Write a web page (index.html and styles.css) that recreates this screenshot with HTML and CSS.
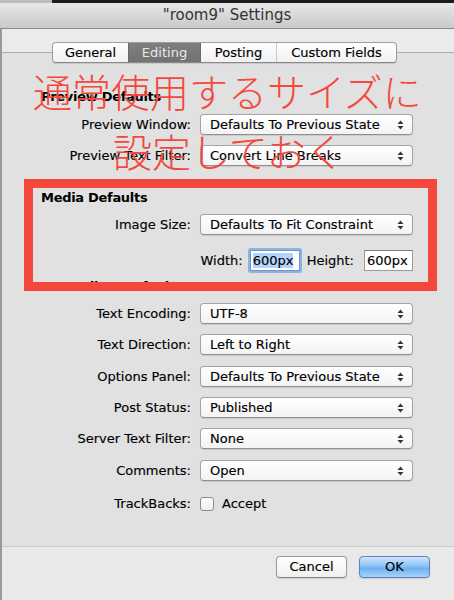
FILE: index.html
```html
<!DOCTYPE html>
<html lang="ja">
<head>
<meta charset="utf-8">
<title>"room9" Settings</title>
<link rel="stylesheet" href="styles.css">
</head>
<body>
<div class="window">
  <div class="topstrip"><div class="strip-left"></div><div class="strip-right"></div></div>
  <div class="titlebar">"room9" Settings</div>
  <div class="frame">
    <div class="header"></div>
    <div class="tabbox">
      <div class="tabs">
        <div class="tab t-general">General</div>
        <div class="tab t-editing selected">Editing</div>
        <div class="tab t-posting">Posting</div>
        <div class="tab t-custom">Custom Fields</div>
      </div>

      <div class="heading h-preview">Preview Defaults</div>
      <div class="row r-pw"><div class="label">Preview Window:</div><div class="popup"><span>Defaults To Previous State</span><svg class="arrows" width="7" height="10" viewBox="0 0 7 10"><path d="M0.5 4 L3.5 0.5 L6.5 4 Z M0.5 6 L3.5 9.5 L6.5 6 Z"/></svg></div></div>
      <div class="row r-ptf"><div class="label">Preview Text Filter:</div><div class="popup"><span>Convert Line Breaks</span><svg class="arrows" width="7" height="10" viewBox="0 0 7 10"><path d="M0.5 4 L3.5 0.5 L6.5 4 Z M0.5 6 L3.5 9.5 L6.5 6 Z"/></svg></div></div>

      <div class="heading h-media">Media Defaults</div>
      <div class="row r-is"><div class="label">Image Size:</div><div class="popup"><span>Defaults To Fit Constraint</span><svg class="arrows" width="7" height="10" viewBox="0 0 7 10"><path d="M0.5 4 L3.5 0.5 L6.5 4 Z M0.5 6 L3.5 9.5 L6.5 6 Z"/></svg></div></div>
      <div class="sizerow">
        <span class="slabel">Width:</span>
        <div class="field focused"><span class="sel">600px</span></div>
        <span class="slabel hl">Height:</span>
        <div class="field">600px</div>
      </div>

      <div class="heading h-post">Post Editor Defaults</div>
      <div class="row r-te"><div class="label">Text Encoding:</div><div class="popup"><span>UTF-8</span><svg class="arrows" width="7" height="10" viewBox="0 0 7 10"><path d="M0.5 4 L3.5 0.5 L6.5 4 Z M0.5 6 L3.5 9.5 L6.5 6 Z"/></svg></div></div>
      <div class="row r-td"><div class="label">Text Direction:</div><div class="popup"><span>Left to Right</span><svg class="arrows" width="7" height="10" viewBox="0 0 7 10"><path d="M0.5 4 L3.5 0.5 L6.5 4 Z M0.5 6 L3.5 9.5 L6.5 6 Z"/></svg></div></div>
      <div class="row r-op"><div class="label">Options Panel:</div><div class="popup"><span>Defaults To Previous State</span><svg class="arrows" width="7" height="10" viewBox="0 0 7 10"><path d="M0.5 4 L3.5 0.5 L6.5 4 Z M0.5 6 L3.5 9.5 L6.5 6 Z"/></svg></div></div>
      <div class="row r-ps"><div class="label">Post Status:</div><div class="popup"><span>Published</span><svg class="arrows" width="7" height="10" viewBox="0 0 7 10"><path d="M0.5 4 L3.5 0.5 L6.5 4 Z M0.5 6 L3.5 9.5 L6.5 6 Z"/></svg></div></div>
      <div class="row r-stf"><div class="label">Server Text Filter:</div><div class="popup"><span>None</span><svg class="arrows" width="7" height="10" viewBox="0 0 7 10"><path d="M0.5 4 L3.5 0.5 L6.5 4 Z M0.5 6 L3.5 9.5 L6.5 6 Z"/></svg></div></div>
      <div class="row r-cm"><div class="label">Comments:</div><div class="popup"><span>Open</span><svg class="arrows" width="7" height="10" viewBox="0 0 7 10"><path d="M0.5 4 L3.5 0.5 L6.5 4 Z M0.5 6 L3.5 9.5 L6.5 6 Z"/></svg></div></div>
      <div class="row r-tb"><div class="label">TrackBacks:</div><div class="check"><span class="box"></span><span>Accept</span></div></div>
    </div>
    <div class="footer">
      <div class="button">Cancel</div>
      <div class="button default">OK</div>
    </div>
  </div>

  <div class="annot-box"></div>
  <div class="annot-text">
    <div class="line1">通常使用するサイズに</div>
    <div class="line2">設定しておく</div>
  </div>
</div>
</body>
</html>
```

FILE: styles.css
```css
html, body {
  margin: 0;
  padding: 0;
}
body {
  width: 454px;
  height: 600px;
  overflow: hidden;
  background: #e9e9e9;
  font-family: "DejaVu Sans", "Noto Sans", sans-serif;
  font-size: 13px;
  color: #000;
}
.window {
  position: relative;
  width: 454px;
  height: 600px;
  display: flex;
  flex-direction: column;
}
.topstrip {
  height: 3px;
  display: flex;
}
.strip-left { width: 52px; background: #bcbcbc; }
.strip-right { flex: 1; background: #1c1c1c; }
.titlebar {
  height: 25px;
  border-bottom: 1px solid #8a8a8a;
  background: linear-gradient(#e8e8e8, #c9c9c9);
  text-align: center;
  font-size: 15px;
  line-height: 25px;
  color: #333;
}
.frame {
  flex: 1;
  display: flex;
  flex-direction: column;
  border-left: 2px solid #9a9a9a;
  background: #ebebeb;
}
.header { height: 23px; }
.tabbox {
  height: 493px;
  border-top: 1px solid #ababab;
  border-bottom: 1px solid #cbcbcb;
  background: #e1e1e1;
  -webkit-text-stroke: 0.15px #000;
}
.tabs {
  margin-top: -11px;
  margin-left: 50px;
  width: 345px;
  height: 21px;
  display: flex;
  box-sizing: border-box;
  border: 1px solid #9d9d9d;
  border-bottom-color: #8a8a8a;
  border-radius: 4px;
  overflow: hidden;
  background: linear-gradient(#ffffff, #f1f1f1);
  box-shadow: 0 1px 1px rgba(0,0,0,0.12);
}
.tab {
  height: 19px;
  line-height: 19px;
  text-align: center;
  color: #000;
  box-sizing: border-box;
}
.t-general { width: 75px; }
.t-editing { width: 73px; }
.t-posting { width: 75px; }
.t-custom { flex: 1; border-left: 1px solid #c8c8c8; }
.tab.selected {
  background: linear-gradient(#7f7f7f, #727272);
  color: #e8e8e8;
  -webkit-text-stroke: 0;
  border-left: 1px solid #6a6a6a;
  border-right: 1px solid #6a6a6a;
}
.heading {
  margin-left: 39px;
  height: 16px;
  line-height: 16px;
  font-weight: bold;
  font-size: 13px;
  letter-spacing: -0.3px;
  color: #000;
  -webkit-text-stroke: 0;
}
.h-preview { margin-top: 26px; }
.h-media { margin-top: 24px; }
.h-post { margin-top: 7px; }
.row {
  display: flex;
  align-items: center;
  height: 21px;
}
.label {
  width: 189px;
  margin-right: 9px;
  text-align: right;
  white-space: nowrap;
}
.popup {
  width: 213px;
  height: 21px;
  box-sizing: border-box;
  border: 1px solid #a3a3a3;
  border-bottom-color: #8f8f8f;
  border-radius: 4px;
  background: linear-gradient(#ffffff, #f3f3f3);
  box-shadow: 0 1px 1px rgba(0,0,0,0.1);
  display: flex;
  align-items: center;
  justify-content: space-between;
  padding: 0 8px 0 9px;
  white-space: nowrap;
}
.arrows { fill: #333; }
.r-pw { margin-top: 9px; }
.r-ptf { margin-top: 10px; }
.r-is { margin-top: 8px; }
.r-te { margin-top: 8px; }
.r-td { margin-top: 10px; }
.r-op { margin-top: 11px; }
.r-ps { margin-top: 10px; }
.r-stf { margin-top: 10px; }
.r-cm { margin-top: 11px; }
.r-tb { margin-top: 12px; }
.sizerow {
  margin-top: 14px;
  height: 23px;
  width: 411px;
  display: flex;
  align-items: center;
  justify-content: flex-end;
}
.slabel { margin-right: 7px; }
.slabel.hl { margin-left: 7px; margin-right: 10px; }
.field {
  width: 49px;
  height: 21px;
  box-sizing: border-box;
  border: 1px solid #9a9a9a;
  border-top-color: #7d7d7d;
  background: #fff;
  line-height: 19px;
  padding-left: 2px;
  white-space: nowrap;
  overflow: hidden;
}
.field.focused {
  width: 50px;
  border-color: #6f94c6;
  box-shadow: 0 0 0 2px #8db2e6;
  border-radius: 1px;
}
.sel { background: #b4d4fd; }
.check {
  display: flex;
  align-items: center;
  gap: 8px;
}
.box {
  width: 14px;
  height: 14px;
  box-sizing: border-box;
  border: 1px solid #8c8c8c;
  border-radius: 3px;
  background: linear-gradient(#ffffff, #eeeeee);
}
.footer {
  flex: 1;
  display: flex;
  justify-content: flex-end;
  align-items: flex-start;
  gap: 12px;
  padding: 9px 24px 0 0;
  background: #e9e9e9;
  -webkit-text-stroke: 0.15px #000;
}
.button {
  width: 71px;
  height: 22px;
  box-sizing: border-box;
  border: 1px solid #9a9a9a;
  border-bottom-color: #858585;
  border-radius: 4px;
  background: linear-gradient(#ffffff, #efefef);
  box-shadow: 0 1px 1px rgba(0,0,0,0.12);
  text-align: center;
  line-height: 20px;
  color: #000;
}
.button.default {
  border-color: #5d82b8;
  background: linear-gradient(#cfe5fb, #86bff3 50%, #6cb0f0 55%, #a7d4fb);
}
.annot-box {
  position: absolute;
  left: 24px;
  top: 179px;
  width: 413px;
  height: 112px;
  box-sizing: border-box;
  border: 9px solid #f4483d;
}
.annot-text {
  position: absolute;
  left: 33px;
  top: 60px;
  font-family: "Noto Sans CJK JP", sans-serif;
  font-weight: 300;
  font-size: 39px;
  line-height: 60px;
  color: #f4483d;
  white-space: nowrap;
}
.line2 { margin-left: 80px; }
```
